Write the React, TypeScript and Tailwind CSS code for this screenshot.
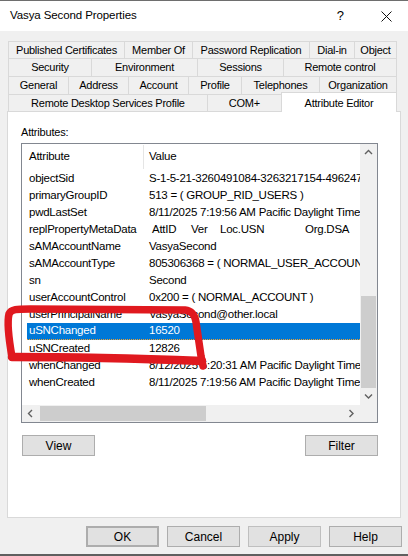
import React from "react";

type Tab = { label: string; w: string };

const tabRows: { h: string; tabs: Tab[] }[] = [
  {
    h: "h-[17px]",
    tabs: [
      { label: "Published Certificates", w: "w-[116px]" },
      { label: "Member Of", w: "w-[68px]" },
      { label: "Password Replication", w: "w-[117px]" },
      { label: "Dial-in", w: "w-[45px]" },
      { label: "Object", w: "w-[43px]" },
    ],
  },
  {
    h: "h-[18px]",
    tabs: [
      { label: "Security", w: "w-[83px]" },
      { label: "Environment", w: "w-[106px]" },
      { label: "Sessions", w: "w-[86px]" },
      { label: "Remote control", w: "w-[114px]" },
    ],
  },
  {
    h: "h-[18px]",
    tabs: [
      { label: "General", w: "w-[60px]" },
      { label: "Address", w: "w-[60px]" },
      { label: "Account", w: "w-[60px]" },
      { label: "Profile", w: "w-[53px]" },
      { label: "Telephones", w: "w-[78px]" },
      { label: "Organization", w: "w-[78px]" },
    ],
  },
];

const rows: [string, string][] = [
  ["objectSid", "S-1-5-21-3260491084-3263217154-4962479053-1104"],
  ["primaryGroupID", "513 = ( GROUP_RID_USERS )"],
  ["pwdLastSet", "8/11/2025 7:19:56 AM Pacific Daylight Time"],
  ["replPropertyMetaData", ""],
  ["sAMAccountName", "VasyaSecond"],
  ["sAMAccountType", "805306368 = ( NORMAL_USER_ACCOUNT )"],
  ["sn", "Second"],
  ["userAccountControl", "0x200 = ( NORMAL_ACCOUNT )"],
  ["userPrincipalName", "VasyaSecond@other.local"],
  ["uSNChanged", "16520"],
  ["uSNCreated", "12826"],
  ["whenChanged", "8/12/2025 5:20:31 AM Pacific Daylight Time"],
  ["whenCreated", "8/11/2025 7:19:56 AM Pacific Daylight Time"],
];

function Chevron({ dir }: { dir: "up" | "down" | "left" | "right" }) {
  const d = {
    up: "M1 5 L4.5 1.5 L8 5",
    down: "M1 1.5 L4.5 5 L8 1.5",
    left: "M5 1 L1.5 4.5 L5 8",
    right: "M1.5 1 L5 4.5 L1.5 8",
  }[dir];
  const vertical = dir === "up" || dir === "down";
  return (
    <svg width={vertical ? 9 : 7} height={vertical ? 7 : 9} viewBox={vertical ? "0 0 9 7" : "0 0 7 9"}>
      <path d={d} fill="none" stroke="#606060" strokeWidth="1.4" />
    </svg>
  );
}

function Button({ label, className = "" }: { label: string; className?: string }) {
  return (
    <div
      className={`w-[73px] h-[21px] flex items-center justify-center bg-[#e1e1e1] border border-[#adadad] text-[12px] text-black ${className}`}
    >
      {label}
    </div>
  );
}

export default function App() {
  return (
    <div className="relative w-[408px] h-[556px] bg-[#f0f0f0] flex flex-col overflow-hidden font-['Liberation_Sans',Arial,sans-serif] text-black">
      {/* Title bar */}
      <div className="h-[31px] shrink-0 bg-white border-t border-[#6e6e6e] flex items-center pl-[10px] pr-[16px]">
        <span className="text-[11.5px] tracking-[-0.1px]">Vasya Second Properties</span>
        <span className="ml-auto mr-[37px] text-[13px]">?</span>
        <svg width="11" height="11" viewBox="0 0 11 11">
          <path d="M0.5 0.5 L10.5 10.5 M10.5 0.5 L0.5 10.5" stroke="#111" strokeWidth="1" />
        </svg>
      </div>

      {/* Tabs */}
      <div className="mt-[10px] ml-[8px] w-[389px] flex flex-col text-[11px] tracking-[-0.25px]">
        {tabRows.map((row, ri) => (
          <div key={ri} className={`flex ${row.h}`}>
            {row.tabs.map((t, ti) => (
              <div
                key={t.label}
                className={`${t.w} h-full flex items-center justify-center border-t border-l border-[#d9d9d9] ${
                  ti === row.tabs.length - 1 ? "border-r" : ""
                }`}
              >
                {t.label}
              </div>
            ))}
          </div>
        ))}
        <div className="flex items-end h-[17px]">
          <div className="w-[201px] h-full flex items-center justify-center border-t border-l border-[#d9d9d9]">
            Remote Desktop Services Profile
          </div>
          <div className="w-[75px] h-full flex items-center justify-center border-t border-l border-[#d9d9d9]">
            COM+
          </div>
          <div className="relative top-[1px] z-10 w-[116px] h-[20px] shrink-0 bg-white border-t border-l border-r border-[#d9d9d9] flex justify-center pt-[2px]">
            Attribute Editor
          </div>
        </div>
      </div>

      {/* Panel */}
      <div className="ml-[7px] w-[394px] h-[407px] bg-white border border-[#d9d9d9] pl-[13px]">
        <div className="mt-[13px] h-[14px] text-[11px] leading-[14px] tracking-[-0.2px]">Attributes:</div>

        <div className="mt-[4px] w-[357px] h-[280px] border border-[#828790] flex flex-col">
          <div className="flex h-[261px]">
            <div className="w-[338px] overflow-hidden flex flex-col text-[11.5px] tracking-[-0.25px] whitespace-nowrap">
              <div className="h-[26px] shrink-0 flex items-center">
                <div className="w-[121px] pl-[7px]">Attribute</div>
                <div className="w-px h-[24px] bg-[#e5e5e5]" />
                <div className="pl-[5px]">Value</div>
              </div>
              {rows.map(([name, value]) => {
                const selected = name === "uSNChanged";
                return (
                  <div
                    key={name}
                    className={`ml-[5px] h-[17px] shrink-0 flex items-center ${
                      selected ? "bg-[#0078d7] text-white border-b border-dotted border-[#f0a030]" : ""
                    }`}
                  >
                    <div className="w-[120px] pl-[2px] shrink-0">{name}</div>
                    {name === "replPropertyMetaData" ? (
                      <div className="flex pl-[5px]">
                        <span className="w-[39px]">AttID</span>
                        <span className="w-[29px]">Ver</span>
                        <span className="w-[85px]">Loc.USN</span>
                        <span>Org.DSA</span>
                      </div>
                    ) : (
                      <div className="pl-[2px]">{value}</div>
                    )}
                  </div>
                );
              })}
            </div>
            {/* Vertical scrollbar */}
            <div className="w-[17px] bg-[#f0f0f0] flex flex-col">
              <div className="h-[17px] flex items-center justify-center">
                <Chevron dir="up" />
              </div>
              <div className="h-[135px]" />
              <div className="h-[92px] mx-[1px] bg-[#cdcdcd]" />
              <div className="h-[17px] flex items-center justify-center">
                <Chevron dir="down" />
              </div>
            </div>
          </div>
          {/* Horizontal scrollbar */}
          <div className="flex h-[17px]">
            <div className="w-[338px] bg-[#f0f0f0] flex items-center">
              <div className="w-[17px] h-full flex items-center justify-center">
                <Chevron dir="left" />
              </div>
              <div className="ml-[1px] w-[166px] h-[15px] bg-[#cdcdcd]" />
              <div className="ml-auto w-[17px] h-full flex items-center justify-center">
                <Chevron dir="right" />
              </div>
            </div>
            <div className="w-[17px] bg-[#f0f0f0]" />
          </div>
        </div>

        <div className="mt-[12px] ml-[1px] w-[356px] flex justify-between">
          <Button label="View" />
          <Button label="Filter" />
        </div>
      </div>

      {/* Dialog buttons */}
      <div className="mt-[8px] flex justify-end gap-[8px] pr-[6px]">
        <Button label="OK" className="border-2 border-[#0078d7]" />
        <Button label="Cancel" />
        <Button label="Apply" className="bg-[#cccccc] border-[#bfbfbf] text-[#a0a0a0]" />
        <Button label="Help" />
      </div>

      <div className="mt-auto h-[2px] bg-[#5f5f5f]" />

      {/* Red marker annotation */}
      <svg className="absolute inset-0 pointer-events-none" width="408" height="556" viewBox="0 0 408 556">
        <path
          d="M12 357 C9 340 7 322 9 314 C11 309 17 309 30 309 L185 310 C193 311 195 316 196 322 L201 356 L203 366"
          fill="none"
          stroke="#e0191f"
          strokeWidth="7.5"
          strokeLinecap="round"
          strokeLinejoin="round"
        />
        <path
          d="M12 357 C70 357 150 359 202 361"
          fill="none"
          stroke="#e0191f"
          strokeWidth="8.5"
          strokeLinecap="round"
        />
      </svg>
    </div>
  );
}
